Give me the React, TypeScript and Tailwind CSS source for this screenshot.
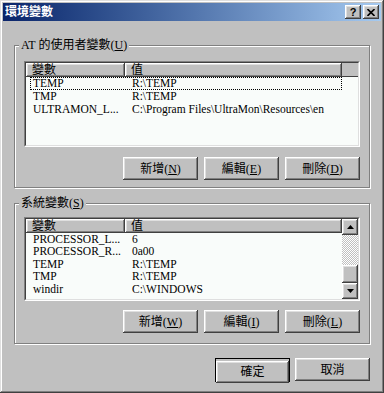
import type { ReactNode } from "react";

const RAISED =
  "shadow-[inset_-1px_-1px_#404040,inset_1px_1px_#ffffff,inset_-2px_-2px_#808080,inset_2px_2px_#dfdfdf]";

interface Row {
  name: string;
  value: string;
}

const USER_VARS: Row[] = [
  { name: "TEMP", value: "R:\\TEMP" },
  { name: "TMP", value: "R:\\TEMP" },
  { name: "ULTRAMON_L...", value: "C:\\Program Files\\UltraMon\\Resources\\en" },
];

const SYS_VARS: Row[] = [
  { name: "PROCESSOR_L...", value: "6" },
  { name: "PROCESSOR_R...", value: "0a00" },
  { name: "TEMP", value: "R:\\TEMP" },
  { name: "TMP", value: "R:\\TEMP" },
  { name: "windir", value: "C:\\WINDOWS" },
];

function Key({ children }: { children: ReactNode }) {
  return <span className="underline underline-offset-[1px]">{children}</span>;
}

function Btn({ children, isDefault }: { children: ReactNode; isDefault?: boolean }) {
  if (isDefault) {
    return (
      <div className="w-[75px] h-[24px] border border-black">
        <button type="button" className={`w-full h-full bg-[#c0c0c0] text-[12px] leading-none ${RAISED}`}>
          {children}
        </button>
      </div>
    );
  }
  return (
    <button type="button" className={`w-[75px] h-[23px] bg-[#c0c0c0] text-[12px] leading-none ${RAISED}`}>
      {children}
    </button>
  );
}

function Arrow({ up }: { up?: boolean }) {
  return (
    <div className={`h-[16px] bg-[#c0c0c0] flex items-center justify-center ${RAISED}`}>
      <svg width="7" height="4" viewBox="0 0 7 4">
        {up ? <path d="M3.5 0 L7 4 L0 4 Z" fill="#000" /> : <path d="M0 0 L7 0 L3.5 4 Z" fill="#000" />}
      </svg>
    </div>
  );
}

function Scrollbar() {
  return (
    <div className="w-[16px] flex flex-col shrink-0">
      <Arrow up />
      <div className="flex-1 bg-[repeating-conic-gradient(#ffffff_0_25%,#c0c0c0_0_50%)] bg-[length:2px_2px]" />
      <div className={`h-[18px] bg-[#c0c0c0] ${RAISED}`} />
      <Arrow />
    </div>
  );
}

function VarList({ rows, focus, scroll, sizeClass, rowClass }: {
  rows: Row[];
  focus?: number;
  scroll?: boolean;
  sizeClass: string;
  rowClass: string;
}) {
  return (
    <div className={`${sizeClass} border border-t-[#808080] border-l-[#808080] border-b-white border-r-white`}>
      <div className="h-full flex overflow-hidden border border-t-[#404040] border-l-[#404040] border-b-[#dfdfdf] border-r-[#dfdfdf] bg-[#f9fcfa]">
        <div className="flex-1 min-w-0 flex flex-col">
          <div className="h-[14px] shrink-0 flex bg-[#c0c0c0] text-[12px] leading-[14px]">
            <div className={`w-[99px] pl-[6px] ${RAISED}`}>變數</div>
            <div className={`w-[217px] pl-[6px] ${RAISED}`}>值</div>
            <div className="flex-1 shadow-[inset_0_-1px_#404040]" />
          </div>
          {rows.map((r, i) => (
            <div
              key={r.name}
              className={`${rowClass} ml-[4px] w-[312px] flex items-center text-[11.5px] whitespace-nowrap border ${
                i === focus ? "border-dotted border-black" : "border-transparent"
              }`}
            >
              <div className="w-[95px] pl-[2px]">{r.name}</div>
              <div className="pl-[6px]">{r.value}</div>
            </div>
          ))}
        </div>
        {scroll && <Scrollbar />}
      </div>
    </div>
  );
}

function Group({ label, children, sizeClass, padClass }: {
  label: ReactNode;
  children: ReactNode;
  sizeClass: string;
  padClass: string;
}) {
  return (
    <div
      className={`relative ${sizeClass} ${padClass} border border-[#808080] shadow-[1px_1px_0_#ffffff,inset_1px_1px_0_#ffffff]`}
    >
      <div className="absolute left-[4px] -top-[8px] h-[14px] leading-[14px] px-[2px] bg-[#c0c0c0] text-[12px]">
        {label}
      </div>
      {children}
    </div>
  );
}

export default function App() {
  return (
    <div className="w-[384px] h-[393px] p-[3px] bg-[#c0c0c0] flex flex-col text-black font-['Liberation_Serif','Noto_Sans_CJK_TC',serif] shadow-[inset_-1px_-1px_#404040,inset_1px_1px_#dfdfdf,inset_-2px_-2px_#808080,inset_2px_2px_#ffffff]">
      <div className="h-[18px] flex items-center pl-[2px] pr-[2px] bg-gradient-to-r from-[#0a246a] to-[#a6caf0]">
        <span className="text-white font-bold text-[12px] leading-none">環境變數</span>
        <div className="ml-auto flex gap-[2px]">
          <div className={`w-[16px] h-[14px] bg-[#c0c0c0] flex items-center justify-center ${RAISED}`}>
            <span className="font-['Liberation_Sans',sans-serif] font-bold text-[11px] leading-none">?</span>
          </div>
          <div className={`w-[16px] h-[14px] bg-[#c0c0c0] flex items-center justify-center ${RAISED}`}>
            <svg width="8" height="7" viewBox="0 0 8 7">
              <path d="M0.5 0 L7.5 7 M7.5 0 L0.5 7" stroke="#000" strokeWidth="1.6" />
            </svg>
          </div>
        </div>
      </div>

      <div className="pl-[11px] pt-[24px] flex flex-col">
        <Group
          sizeClass="w-[356px] h-[143px]"
          padClass="pl-[9px] pt-[15px]"
          label={
            <>
              AT 的使用者變數(<Key>U</Key>)
            </>
          }
        >
          <VarList rows={USER_VARS} focus={0} sizeClass="w-[336px] h-[86px]" rowClass="h-[13px]" />
          <div className="w-[336px] mt-[10px] flex justify-end gap-[6px]">
            <Btn>新增(<Key>N</Key>)</Btn>
            <Btn>編輯(<Key>E</Key>)</Btn>
            <Btn>刪除(<Key>D</Key>)</Btn>
          </div>
        </Group>

        <div className="mt-[15px]">
          <Group
            sizeClass="w-[356px] h-[141px]"
            padClass="pl-[9px] pt-[13px]"
            label={
              <>
                系統變數(<Key>S</Key>)
              </>
            }
          >
            <VarList rows={SYS_VARS} scroll sizeClass="w-[336px] h-[84px]" rowClass="h-[12.5px]" />
            <div className="w-[336px] mt-[9px] flex justify-end gap-[6px]">
              <Btn>新增(<Key>W</Key>)</Btn>
              <Btn>編輯(<Key>I</Key>)</Btn>
              <Btn>刪除(<Key>L</Key>)</Btn>
            </div>
          </Group>
        </div>

        <div className="w-[356px] mt-[14px] flex justify-end gap-[5px]">
          <Btn isDefault>確定</Btn>
          <Btn>取消</Btn>
        </div>
      </div>
    </div>
  );
}
